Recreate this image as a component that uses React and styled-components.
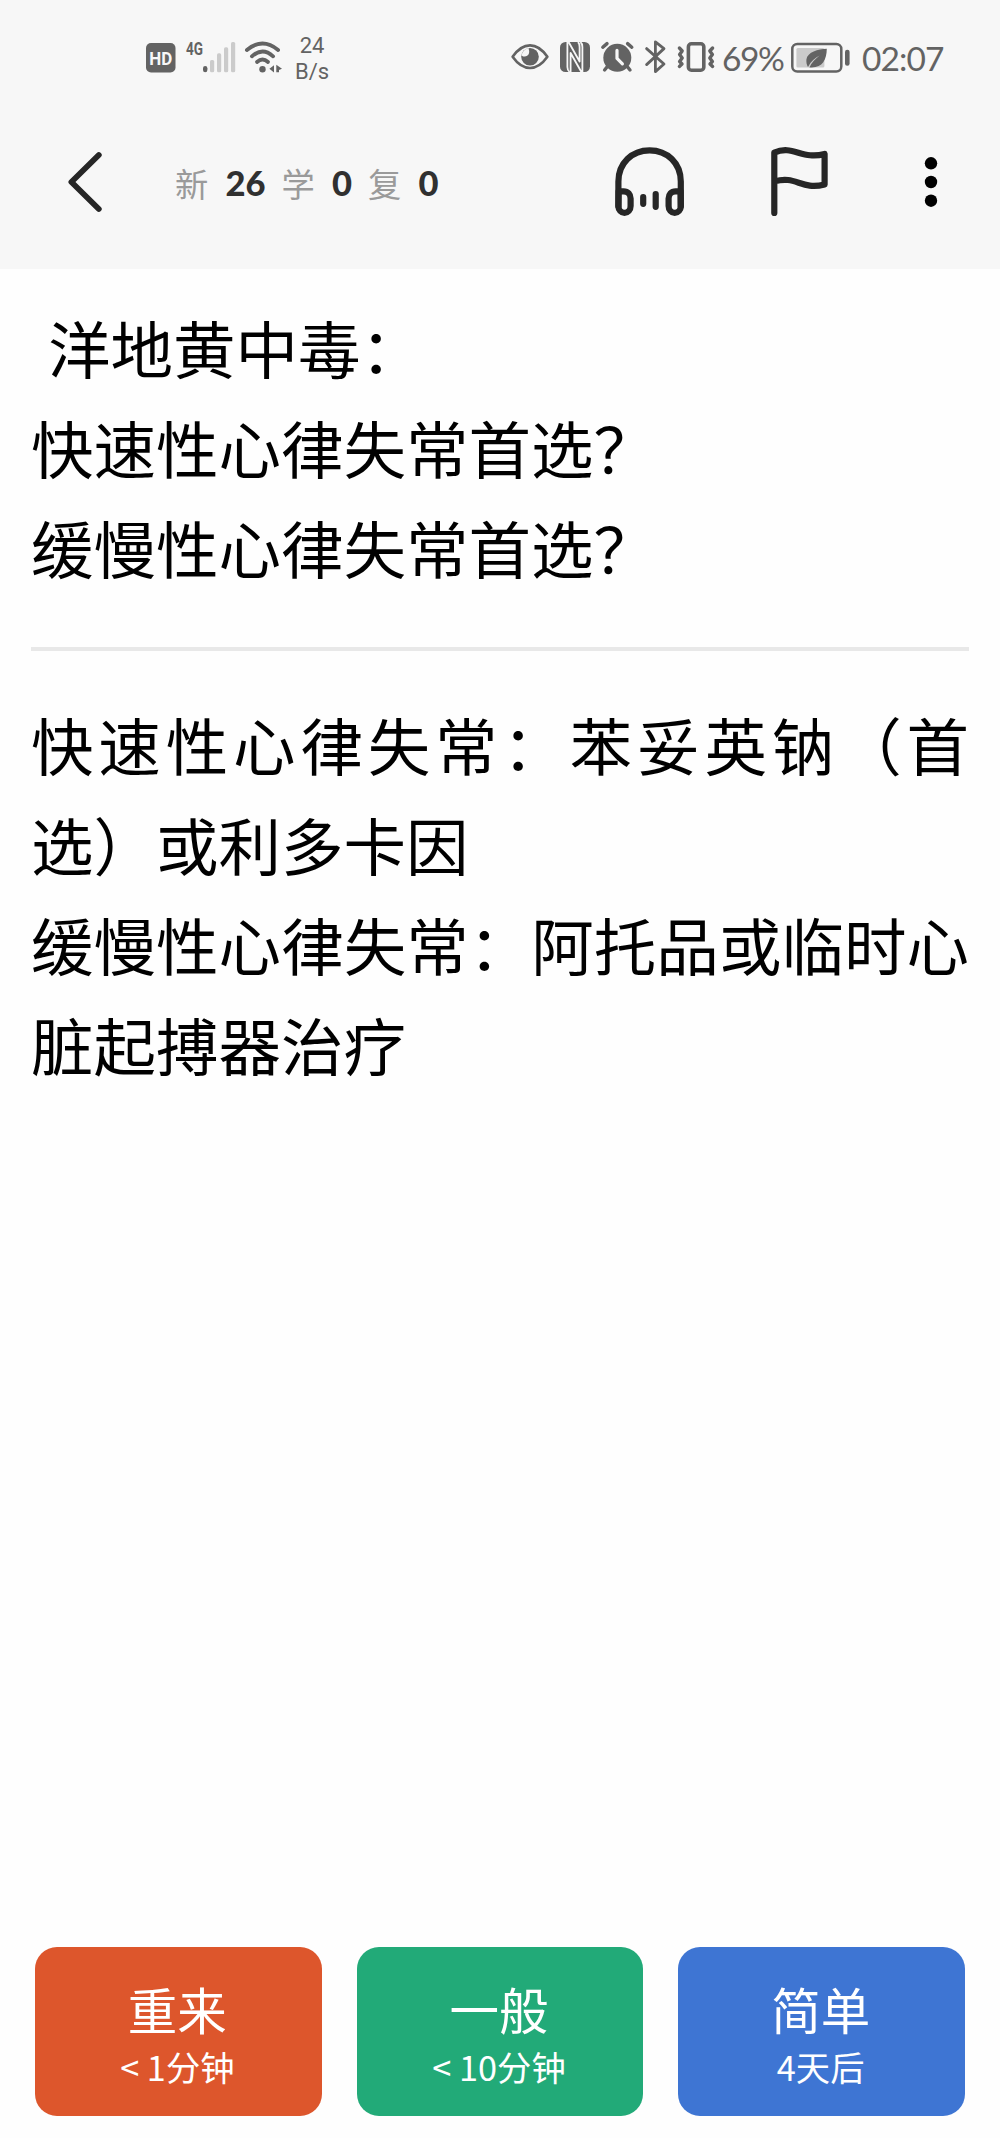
import React from 'react';
import styled, { createGlobalStyle } from 'styled-components';

const GlobalStyle = createGlobalStyle`
    body {
        margin: 0;
        background: #fefefe;
        font-family: Lato, "Noto Sans CJK SC", sans-serif;
    }

    * {
        box-sizing: border-box;
    }
`;

const Screen = styled.div`
    width: 1000px;
    height: 2138px;
    display: flex;
    flex-direction: column;
    overflow: hidden;
`;

const Header = styled.header`
    height: 269px;
    flex: none;
    background: #f7f7f7;
`;

const StatusBar = styled.div`
    height: 95px;
    padding: 19px 55px 0 146px;
    display: flex;
    align-items: center;
    justify-content: space-between;
    color: #636363;
`;

const StatusGroup = styled.div`
    display: flex;
    align-items: center;
`;

const Icon = styled.svg`
    display: block;
    flex: none;
    overflow: visible;
    margin-left: ${props => props.$gap || 0}px;
`;

const Speed = styled.div`
    width: 40px;
    margin-left: 10px;
    padding-top: 3px;
    font-family: Roboto, sans-serif;
    font-size: 22px;
    line-height: 26px;
    text-align: center;
`;

const StatusText = styled.span`
    width: ${props => props.$width}px;
    margin-left: ${props => props.$gap}px;
    padding-top: 2px;
    font-size: 33.5px;
    line-height: 40px;
    letter-spacing: ${props => props.$spacing || 0}px;
    white-space: nowrap;
`;

const Toolbar = styled.div`
    height: 174px;
    padding: 0 62px 0 67px;
    display: flex;
    align-items: center;
`;

const IconButton = styled.button`
    padding: 0;
    border: none;
    background: none;
    color: ${props => props.$color || '#262626'};
    margin-left: ${props => props.$gap || 0}px;
    cursor: pointer;
`;

const Counters = styled.div`
    display: flex;
    align-items: center;
    flex: 1;
    margin-left: 72px;
    padding-top: 1px;
    line-height: 48px;
`;

const CounterLabel = styled.span`
    width: 33px;
    font-size: 33.3px;
    font-family: "Noto Sans CJK SC", sans-serif;
    color: #9a9a9a;
`;

const CounterValue = styled.span`
    margin: 0 16px 0 17.5px;
    padding-top: 1px;
    font-size: 34.5px;
    font-weight: 900;
    color: #303030;
`;

const Card = styled.main`
    flex: 1;
    padding: 28px 31px 0;
    font-family: "Noto Sans CJK SC", sans-serif;
    font-size: 62.5px;
    line-height: 100px;
    color: #000;
`;

const Paragraph = styled.p`
    margin: 0;
    text-align: justify;
    text-indent: ${props => props.$indent || 0}px;
`;

const Divider = styled.hr`
    height: 4px;
    margin: 50px 0 43px;
    border: none;
    background: #e8e8e8;
`;

const Answers = styled.footer`
    display: grid;
    grid-template-columns: repeat(3, 1fr);
    gap: 35px;
    padding: 0 35px 22px;
`;

const AnswerButton = styled.button`
    height: 169px;
    padding: 4px 2px 0 0;
    border: none;
    border-radius: 22px;
    background: ${props => props.$color};
    color: #fff;
    font-family: "Noto Sans CJK SC", sans-serif;
    display: flex;
    flex-direction: column;
    align-items: center;
    justify-content: center;
    cursor: pointer;
`;

const AnswerTitle = styled.span`
    font-size: 49.5px;
    line-height: 64px;
`;

const AnswerTime = styled.span`
    font-size: 34.3px;
    line-height: 50px;
`;

const HdIcon = () => (
    <Icon width="30" height="34" viewBox="0 0 30 34">
        <rect x="0" y="3" width="29.5" height="29.5" rx="5" fill="currentColor" />
        <text x="14.7" y="25.4" fontSize="19" fontWeight="700" fill="#f7f7f7" textAnchor="middle"
            textLength="23" lengthAdjust="spacingAndGlyphs" fontFamily="Roboto">HD</text>
    </Icon>
);

const SignalIcon = () => (
    <Icon $gap={10} width="50" height="34" viewBox="0 0 50 34">
        <text x="0" y="15.4" fontSize="18.5" fontWeight="700" fill="currentColor"
            textLength="17" lengthAdjust="spacingAndGlyphs" fontFamily="Roboto">4G</text>
        <rect x="17" y="26" width="4.4" height="6.3" rx="2.2" fill="currentColor" />
        <g fill="#cbcbcb">
            <rect x="24" y="20" width="4.2" height="12.3" rx="1.6" />
            <rect x="31" y="13.3" width="4.2" height="19" rx="1.6" />
            <rect x="38" y="7.3" width="4.2" height="25" rx="1.6" />
            <rect x="45" y="2" width="4.2" height="30.3" rx="1.6" />
        </g>
    </Icon>
);

const WifiIcon = () => (
    <Icon $gap={9} width="37" height="34" viewBox="0 0 37 34">
        <g fill="none" stroke="currentColor" strokeWidth="3.8" strokeLinecap="round">
            <path d="M1.9 10 Q17.5 -3 33.1 10" />
            <path d="M6.9 16.3 Q17.5 6.6 28.1 16.3" />
            <path d="M12 22 Q17.5 17 23 22" />
        </g>
        <circle cx="17.5" cy="29.2" r="3.2" fill="currentColor" />
        <path d="M24.4 28.8 L29 25.2 V32.4 Z M31.3 24.8 L37 28.8 L34 30 V32.2 H31.3 Z" fill="currentColor" />
    </Icon>
);

const EyeIcon = () => (
    <Icon width="38" height="34" viewBox="0 0 38 34">
        <path d="M1.6 16.8 Q9.5 5.4 19 5.4 T36.4 16.8 Q28.5 28 19 28 T1.6 16.8 Z"
            fill="none" stroke="currentColor" strokeWidth="2.6" strokeLinejoin="round" />
        <circle cx="19" cy="16.8" r="8.8" fill="currentColor" />
        <path d="M17.4 8 Q19.4 13.4 16.2 15.8 Q13.4 17.6 10.6 15.4 Q11.4 10 17.4 8 Z" fill="#f7f7f7" />
    </Icon>
);

const NfcIcon = () => (
    <Icon $gap={11} width="30" height="34" viewBox="0 0 30 34">
        <rect x="0" y="2" width="30" height="30" rx="5.5" fill="currentColor" />
        <g fill="none" stroke="#f7f7f7" strokeWidth="1.8" strokeLinejoin="round">
            <path d="M7.4 2 V27 Q7.4 30.5 9.6 32 M8.6 2 L19.6 21.5 V7 Q19.6 3.6 18 2" />
            <path d="M10.6 32 V13 L21.4 32 M22.4 32 V7 Q22.4 3.6 20.4 2" />
        </g>
    </Icon>
);

const AlarmIcon = () => (
    <Icon $gap={11} width="33" height="34" viewBox="0 0 33 34">
        <circle cx="16.3" cy="17.8" r="14" fill="currentColor" />
        <g stroke="currentColor" strokeWidth="3.4" strokeLinecap="round">
            <path d="M1.8 7.2 L6 3.6 M30.8 7.2 L26.6 3.6" />
            <path d="M6 27 L3.6 30 M26.6 27 L29 30" />
        </g>
        <path d="M16 10.4 V18.4 L21.4 23.8" fill="none" stroke="#f7f7f7" strokeWidth="3.2" strokeLinecap="round" strokeLinejoin="round" />
    </Icon>
);

const BluetoothIcon = () => (
    <Icon $gap={11} width="21" height="34" viewBox="0 0 21 34">
        <path d="M1.6 8.6 L19 24 L10.4 31.6 V1.8 L19 8.6 L1.6 24.6"
            fill="none" stroke="currentColor" strokeWidth="2.8" strokeLinecap="round" strokeLinejoin="round" />
    </Icon>
);

const VibrateIcon = () => (
    <Icon $gap={11} width="38" height="34" viewBox="0 0 38 34">
        <g fill="none" stroke="currentColor" strokeLinecap="round" strokeLinejoin="round">
            <rect x="11.4" y="3.8" width="15.4" height="26.4" rx="3" strokeWidth="3.6" />
            <path d="M2.4 8 L5.2 11 L2.6 14.5 L5.2 18 L2.6 21.5 L5 24 L2.4 26.4" strokeWidth="3.4" />
            <path d="M35.6 8 L32.8 11 L35.4 14.5 L32.8 18 L35.4 21.5 L33 24 L35.6 26.4" strokeWidth="3.4" />
        </g>
    </Icon>
);

const BatteryIcon = () => (
    <Icon $gap={7} width="59" height="34" viewBox="0 0 59 34">
        <rect x="1.3" y="3.9" width="49" height="27.6" rx="5" fill="none" stroke="currentColor" strokeWidth="2.5" />
        <rect x="5.4" y="8" width="28" height="19.6" rx="1.5" fill="#cbcbcb" />
        <path d="M35.8 8.8 C27 9.4 16.6 11.8 15.4 19.6 C15.2 22.4 15.6 25 17 27 C20 21.4 24 18 28.6 15.6 C24 19 20.6 23 18.4 27.4 C31 28.6 35.6 20.4 35.8 8.8 Z" fill="currentColor" />
        <rect x="54" y="9.8" width="4.6" height="16" rx="2.2" fill="currentColor" />
    </Icon>
);

const BackIcon = () => (
    <Icon width="36" height="64" viewBox="0 0 36 64">
        <path d="M31.8 5 L4.4 32 L31.8 59" fill="none" stroke="currentColor" strokeWidth="5.8" strokeLinecap="round" strokeLinejoin="round" />
    </Icon>
);

const HeadphonesIcon = () => (
    <Icon width="70" height="70" viewBox="0 0 70 70">
        <g fill="none" stroke="currentColor" strokeWidth="6.2" strokeLinecap="round" strokeLinejoin="round">
            <path d="M3.4 59.5 V34.5 C3.4 16 17 3.3 34.6 3.3 S65.8 16 65.8 34.5 V59.5" />
            <path d="M3.6 44.3 H8.6 C13 44.3 15.6 47.5 15.6 51.5 V59 C15.6 63 12.8 65.9 9.5 65.9 S3.4 63 3.4 59 Z" />
            <path d="M65.6 44.3 H60.6 C56.2 44.3 53.6 47.5 53.6 51.5 V59 C53.6 63 56.4 65.9 59.7 65.9 S65.8 63 65.8 59 Z" />
            <path d="M28.2 50.2 V56.8 M40.7 47 V59.8" />
        </g>
    </Icon>
);

const FlagIcon = () => (
    <Icon width="58" height="70" viewBox="0 0 58 70">
        <path d="M3.3 66 V5.6 C22 -2.6 31 13.2 53.6 7 V37.4 C30 43.4 25 28 3.6 34.4"
            fill="none" stroke="currentColor" strokeWidth="6.2" strokeLinecap="round" strokeLinejoin="round" />
    </Icon>
);

const MoreIcon = () => (
    <Icon width="14" height="52" viewBox="0 0 14 52">
        <circle cx="7" cy="7.3" r="6.2" fill="currentColor" />
        <circle cx="7" cy="26" r="6.2" fill="currentColor" />
        <circle cx="7" cy="44.7" r="6.2" fill="currentColor" />
    </Icon>
);

const counters = [
    { label: '新', value: 26 },
    { label: '学', value: 0 },
    { label: '复', value: 0 },
];

const answers = [
    { title: '重来', time: '< 1分钟', color: '#dd562c' },
    { title: '一般', time: '< 10分钟', color: '#22aa78' },
    { title: '简单', time: '4天后', color: '#3e75d3' },
];

const App = () => (
    <Screen lang="zh-CN">
        <GlobalStyle />
        <Header>
            <StatusBar>
                <StatusGroup>
                    <HdIcon />
                    <SignalIcon />
                    <WifiIcon />
                    <Speed>24<br />B/s</Speed>
                </StatusGroup>
                <StatusGroup>
                    <EyeIcon />
                    <NfcIcon />
                    <AlarmIcon />
                    <BluetoothIcon />
                    <VibrateIcon />
                    <StatusText $width={62} $gap={7} $spacing={-1.4}>69%</StatusText>
                    <BatteryIcon />
                    <StatusText $width={83} $gap={12} $spacing={-0.9}>02:07</StatusText>
                </StatusGroup>
            </StatusBar>
            <Toolbar>
                <IconButton><BackIcon /></IconButton>
                <Counters>
                    {counters.map(counter => (
                        <React.Fragment key={counter.label}>
                            <CounterLabel>{counter.label}</CounterLabel>
                            <CounterValue>{counter.value}</CounterValue>
                        </React.Fragment>
                    ))}
                </Counters>
                <IconButton><HeadphonesIcon /></IconButton>
                <IconButton $gap={86}><FlagIcon /></IconButton>
                <IconButton $gap={95} $color="#000"><MoreIcon /></IconButton>
            </Toolbar>
        </Header>
        <Card>
            <Paragraph $indent={17}>洋地黄中毒：</Paragraph>
            <Paragraph>快速性心律失常首选？</Paragraph>
            <Paragraph>缓慢性心律失常首选？</Paragraph>
            <Divider />
            <Paragraph>快速性心律失常：苯妥英钠（首选）或利多卡因</Paragraph>
            <Paragraph>缓慢性心律失常：阿托品或临时心脏起搏器治疗</Paragraph>
        </Card>
        <Answers>
            {answers.map(answer => (
                <AnswerButton key={answer.title} $color={answer.color}>
                    <AnswerTitle>{answer.title}</AnswerTitle>
                    <AnswerTime>{answer.time}</AnswerTime>
                </AnswerButton>
            ))}
        </Answers>
    </Screen>
);

export default App;
